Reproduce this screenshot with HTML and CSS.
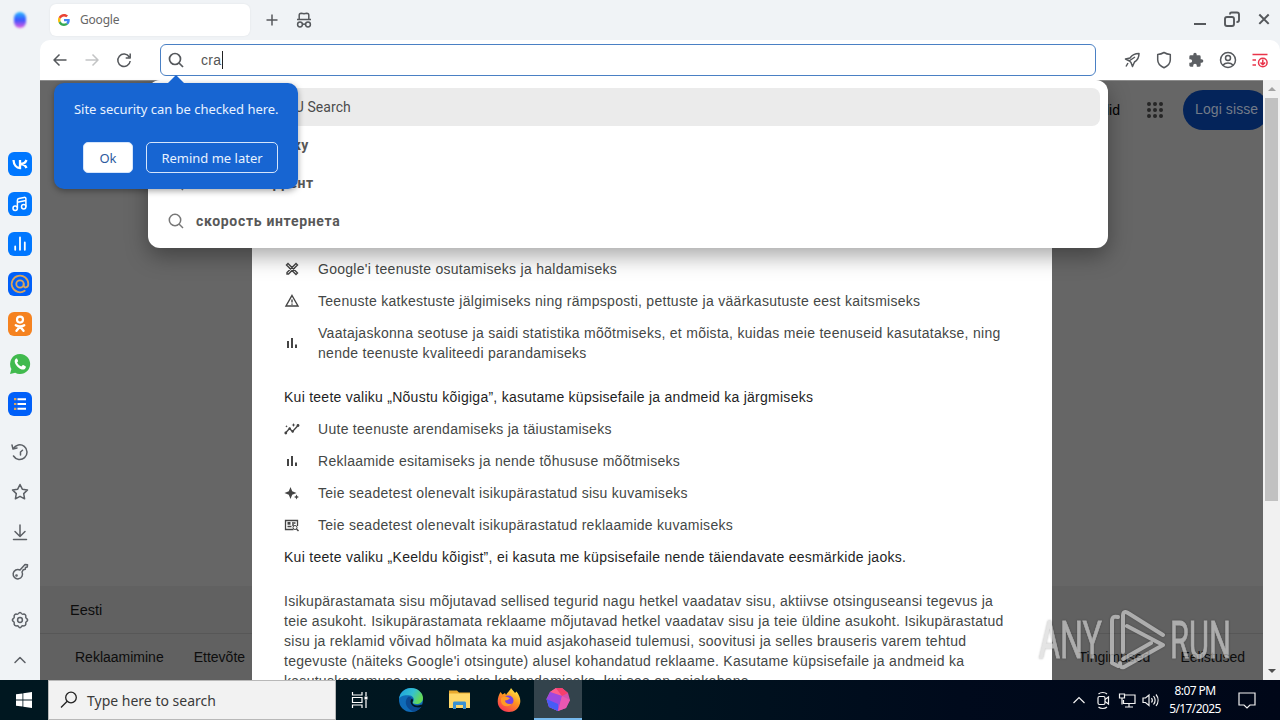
FILE: index.html
```html
<!DOCTYPE html>
<html lang="et">
	<head>
		<meta charset="utf-8">
		<meta name="viewport" content="width=device-width,initial-scale=1.0">
		<title>Google</title>
		<link rel="stylesheet" href="styles.css">
	</head>
	<body>
		<div class="browser">
			<aside class="sidebar">
				<div class="profile"></div>
				<nav class="apps">
					<svg viewBox="0 0 24 24"><rect width="24" height="24" rx="6" fill="#07f"/><path d="M5.500 8c.3 5 3 8 6.500 8V8M18.500 8c-1 2.500-3.500 4-6 4 2.500 0 5 1.500 6 4" fill="none" stroke="#fff" stroke-width="2.300"/></svg>
					<svg viewBox="0 0 24 24"><rect width="24" height="24" rx="6" fill="#07f"/><g fill="none" stroke="#fff" stroke-width="1.500"><circle cx="7.200" cy="16.300" r="2.200"/><circle cx="15.700" cy="14.800" r="2.200"/><path d="M9.400 16V8.200c0-1 .6-1.600 1.500-1.800l5.200-1c1-.2 1.800.4 1.800 1.400v8M9.400 10.200l8.500-1.600"/></g></svg>
					<svg viewBox="0 0 24 24"><rect width="24" height="24" rx="6" fill="#07f"/><path d="M7.200 14.500v3.300M12 5.500v12.300M16.800 10.500v7.300" stroke="#fff" stroke-width="1.800" stroke-linecap="round"/></svg>
					<svg viewBox="0 0 24 24"><rect width="24" height="24" rx="6" fill="#005ff9"/><g fill="none" stroke="#d9a45c" stroke-width="1.800" stroke-linecap="round"><circle cx="12" cy="12" r="3.700"/><path d="M15.700 12v1.200c0 3.400 4.600 3 4.600-1.200a8.300 8.300 0 1 0-3.600 6.800"/></g></svg>
					<svg viewBox="0 0 24 24"><rect width="24" height="24" rx="6" fill="#f58220"/><circle cx="12" cy="7.600" r="3" fill="none" stroke="#fff" stroke-width="2.200"/><path d="M7.800 13.200c2.700 1.700 5.700 1.700 8.400 0M12 14.500l-3.500 4.300M12 14.500l3.500 4.300" fill="none" stroke="#fff" stroke-width="2.400" stroke-linecap="round"/></svg>
					<svg viewBox="0 0 24 24"><path d="M12 2a10 10 0 0 0-8.600 15L2 22l5.200-1.300A10 10 0 1 0 12 2z" fill="#41ba4e"/><path d="M8 6.600c-2.700 2.200-.8 6.200 2 8.600 2.700 2.400 6.400 3.500 7.700.5.300-.8.200-1.200-.2-1.500l-2.200-1.100c-.4-.2-.8 0-1.100.4l-.8 1c-2-.7-3.500-2.200-4.300-4 1.300-1.200 1-1.600.6-2.500l-.5-1.200c-.3-.5-.8-.5-1.200-.2z" fill="#fff"/></svg>
					<svg viewBox="0 0 24 24"><rect width="24" height="24" rx="6" fill="#005ff9"/><path d="M9.500 7.200h8.500M9.500 12h8.500M9.500 16.800h8.500" stroke="#fff" stroke-width="1.900"/><path d="M6 7.200h2.400M6 12h2.400M6 16.800h2.400" stroke="#d9a45c" stroke-width="2.200"/></svg>
				</nav>
				<nav class="tools">
					<svg viewBox="0 0 20 20"><path d="M2 3l1 4 4-1M3.300 6.700A7.300 7.300 0 1 1 3.500 14M10.500 13v-3l2-1.800"/></svg>
					<svg viewBox="0 0 20 20"><path d="M10 2.500l2.300 4.700 5.200.7-3.800 3.700.9 5.200-4.600-2.500-4.600 2.500.9-5.200-3.800-3.700 5.200-.7z"/></svg>
					<svg viewBox="0 0 20 20"><path d="M10 3v11M5 9.500l5 5 5-5M3.500 17.500h13"/></svg>
					<svg viewBox="0 0 20 20"><path d="M10 8l5-5.500 2.500.2-.2 2.300-1.800.4-.2 1.800-2 .5-1.300 2.300a4.700 4.700 0 1 1-2-2z"/><circle cx="6.500" cy="13.500" r=".6"/></svg>
					<svg viewBox="0 0 20 20"><path d="M8.500 3.500c.8-1.500 2.200-1.500 3 0 .4.700 1 .9 1.700.7 1.700-.4 3 .9 2.600 2.600-.2.700.1 1.300.7 1.700 1.500.8 1.500 2.200 0 3-.6.400-.9 1-.7 1.700.4 1.700-.9 3-2.600 2.600-.7-.2-1.300.100-1.700.7-.8 1.500-2.200 1.500-3 0-.4-.6-1-.9-1.700-.7-1.700.4-3-.9-2.600-2.600.2-.7-.1-1.300-.7-1.700-1.500-.8-1.500-2.200 0-3 .6-.4.900-1 .7-1.700-.4-1.700.9-3 2.600-2.600.7.200 1.300 0 1.700-.7z"/><circle cx="10" cy="10" r="2.400"/></svg>
					<svg viewBox="0 0 20 20"><path d="M5 12.500l5-5 5 5"/></svg>
				</nav>
			</aside>

			<main class="window">
				<header class="tabstrip">
					<div class="tab">
						<svg class="favicon" viewBox="0 0 48 48"><path fill="#EA4335" d="M24 9.500c3.540 0 6.710 1.220 9.210 3.600l6.850-6.850C35.900 2.380 30.470 0 24 0 14.620 0 6.510 5.380 2.560 13.220l7.980 6.190C12.430 13.720 17.740 9.500 24 9.500z"/><path fill="#4285F4" d="M46.980 24.550c0-1.570-.15-3.090-.38-4.550H24v9.020h12.940c-.58 2.960-2.260 5.480-4.780 7.180l7.730 6c4.510-4.180 7.090-10.360 7.090-17.650z"/><path fill="#FBBC05" d="M10.530 28.590c-.48-1.450-.76-2.990-.76-4.590s.27-3.140.76-4.590l-7.980-6.190C.92 16.460 0 20.120 0 24s.92 7.540 2.560 10.780z"/><path fill="#34A853" d="M24 48c6.480 0 11.930-2.130 15.890-5.810l-7.730-6c-2.150 1.450-4.920 2.300-8.160 2.300-6.260 0-11.570-4.220-13.470-9.910l-7.980 6.190C6.510 42.620 14.620 48 24 48z"/></svg>
						<span>Google</span>
					</div>
					<svg class="line-icon" viewBox="0 0 20 20"><path d="M10 4.500v11M4.500 10h11"/></svg>
					<svg class="line-icon" viewBox="0 0 20 20"><path d="M3 9.500h14M5.200 9V5.200c0-1.200.7-2 2-2l2.800.5 2.800-.5c1.300 0 2 .8 2 2V9M8.500 14.500c1-.6 2-.6 3 0"/><circle cx="6" cy="14.500" r="2.400"/><circle cx="14" cy="14.500" r="2.400"/></svg>
					<div class="window-buttons">
						<svg class="line-icon" viewBox="0 0 20 20"><path d="M4 14h12" stroke-width="2"/></svg>
						<svg class="line-icon heavy" viewBox="0 0 20 20"><rect x="3" y="7" width="9" height="9" rx="2"/><path d="M8 4.500V4c0-1 .6-1.500 1.500-1.500H15c1.200 0 2 .8 2 2V10c0 1.200-.8 2-2 2h-.5"/></svg>
						<svg class="line-icon" viewBox="0 0 20 20"><path d="M5.300 4.500l9.400 9.400M14.700 4.500l-9.400 9.400" stroke-width="2"/></svg>
					</div>
				</header>

				<div class="toolbar">
					<div class="nav-buttons">
						<svg class="line-icon" viewBox="0 0 20 20"><path d="M16.500 10H4M9.500 4.500L4 10l5.500 5.500"/></svg>
						<svg class="line-icon disabled" viewBox="0 0 20 20"><path d="M3.500 10H16M10.500 4.500L16 10l-5.500 5.500"/></svg>
						<svg class="line-icon" viewBox="0 0 20 20"><path d="M15.300 7A6.200 6.200 0 1 0 16.200 11M16.200 3.500V8h-4.500"/></svg>
					</div>
					<div class="address">
						<svg class="line-icon lens" viewBox="0 0 20 20"><circle cx="9" cy="9" r="5.500"/><path d="M13 13l4 4"/></svg>
						<span class="query">cra</span>
					</div>
					<div class="extensions">
						<svg class="line-icon" viewBox="0 0 20 20"><path d="M17 3.500c-4 0-7 1.500-9 4.500L3.500 9l4 2L9 12.500l1.500 4 2-4.500C16 10 17 7 17 3.500zM7 11l6-4M6 13l-2 3.500"/></svg>
						<svg class="line-icon" viewBox="0 0 20 20"><path d="M10 2.500c2 1.300 4 1.900 6.300 2v5.200c0 3.700-2.500 6.300-6.300 8-3.800-1.700-6.300-4.300-6.300-8V4.500c2.300-.1 4.300-.7 6.300-2z"/></svg>
						<svg class="puzzle" viewBox="0 0 24 24"><path d="M20.500 11H19V7a2 2 0 0 0-2-2h-4V3.500a2.500 2.500 0 0 0-5 0V5H4a2 2 0 0 0-2 2v3.800h1.500a2.700 2.700 0 0 1 0 5.400H2V20c0 1.100.9 2 2 2h3.800v-1.500a2.700 2.700 0 0 1 5.400 0V22H17a2 2 0 0 0 2-2v-4h1.500a2.500 2.500 0 0 0 0-5z"/></svg>
						<svg class="line-icon" viewBox="0 0 20 20"><circle cx="10" cy="10" r="7.500"/><circle cx="10" cy="8" r="2.500"/><path d="M5 15c2.500-2.700 7.500-2.700 10 0"/></svg>
						<svg class="line-icon alert" viewBox="0 0 20 20"><path d="M2.500 4.500h15M2.500 10h3.500M2.500 15h3.500"/><circle cx="12.800" cy="12.500" r="4.300"/><path d="M12.800 9.500v5M10.500 12.500l2.300 2.300 2.300-2.300"/></svg>
					</div>
				</div>

				<div class="content">
					<div class="page">
						<div class="page-header">
							<span class="link-images">Pildid</span>
							<svg class="grid-icon" viewBox="0 0 18 18"><path d="M3 3h.01M9 3h.01M15 3h.01M3 9h.01M9 9h.01M15 9h.01M3 15h.01M9 15h.01M15 15h.01"/></svg>
							<span class="login">Logi sisse</span>
						</div>
						<footer class="page-footer">
							<div class="country">Eesti</div>
							<div class="footer-links">
								<span>Reklaamimine</span>
								<span>Ettevõte</span>
								<span class="terms">Tingimused</span>
								<span>Eelistused</span>
							</div>
						</footer>
					</div>
					<div class="scrollbar">
						<span class="arrow-up"></span>
						<div class="thumb"></div>
						<span class="arrow-down"></span>
					</div>

					<section class="consent">
						<ul>
							<li><svg viewBox="0 0 16 16"><path d="M4 2.500l9.500 9.500-1.500 1.500L2.500 4zM12 2.500L13.500 4 4.500 13H3v-1.500z" fill="none" stroke="#444" stroke-width="1.400"/></svg><p>Google'i teenuste osutamiseks ja haldamiseks</p></li>
							<li><svg viewBox="0 0 16 16"><path d="M8 2.500L14 13H2zM8 6.500v3M8 10.500v1.200" fill="none" stroke="#444" stroke-width="1.400"/></svg><p>Teenuste katkestuste jälgimiseks ning rämpsposti, pettuste ja väärkasutuste eest kaitsmiseks</p></li>
							<li><svg viewBox="0 0 16 16"><path d="M4 6v7M8 3v10M12 9.500V13" stroke="#444" stroke-width="2"/></svg><p>Vaatajaskonna seotuse ja saidi statistika mõõtmiseks, et mõista, kuidas meie teenuseid kasutatakse, ning<br>nende teenuste kvaliteedi parandamiseks</p></li>
						</ul>
						<p class="lead">Kui teete valiku „Nõustu kõigiga”, kasutame küpsisefaile ja andmeid ka järgmiseks</p>
						<ul>
							<li><svg viewBox="0 0 16 16"><path d="M1.500 12l4-4.500 3 3L14.500 4" fill="none" stroke="#444" stroke-width="1.300"/><g fill="#444"><circle cx="1.800" cy="12" r="1.400"/><circle cx="5.700" cy="7.500" r="1.200"/><circle cx="8.700" cy="10.500" r="1.200"/><circle cx="14" cy="4.500" r="1.400"/><path d="M9.500 2l.6 1.400 1.400.6-1.400.6-.6 1.400-.6-1.400L7.500 4l1.400-.6zM2.500 4l.4.900.9.400-.9.400-.4.900-.4-.9-.9-.4.900-.4z"/></g></svg><p>Uute teenuste arendamiseks ja täiustamiseks</p></li>
							<li><svg viewBox="0 0 16 16"><path d="M4 6v7M8 3v10M12 9.500V13" stroke="#444" stroke-width="2"/></svg><p>Reklaamide esitamiseks ja nende tõhususe mõõtmiseks</p></li>
							<li><svg viewBox="0 0 16 16"><path fill="#444" d="M6.500 2L8.200 6.300 12.500 8 8.200 9.700 6.500 14 4.800 9.700.5 8l4.300-1.700zM12.500 9.500l.8 1.700 1.700.8-1.700.8-.8 1.700-.8-1.700-1.700-.8 1.700-.8z"/></svg><p>Teie seadetest olenevalt isikupärastatud sisu kuvamiseks</p></li>
							<li><svg viewBox="0 0 16 16"><path d="M13.500 9V3.500h-12v9h8M3.500 9.500h4M8 6h3.500M8 8h2" fill="none" stroke="#444" stroke-width="1.300"/><path d="M3.500 5h3v2.700h-3z" fill="#444"/><circle cx="11" cy="10.500" r="2" fill="none" stroke="#444"/><path d="M12.500 12l2 2" stroke="#444" stroke-width="1.500"/></svg><p>Teie seadetest olenevalt isikupärastatud reklaamide kuvamiseks</p></li>
						</ul>
						<p class="lead-close">Kui teete valiku „Keeldu kõigist”, ei kasuta me küpsisefaile nende täiendavate eesmärkide jaoks.</p>
						<p class="details">Isikupärastamata sisu mõjutavad sellised tegurid nagu hetkel vaadatav sisu, aktiivse otsinguseansi tegevus ja<br>teie asukoht. Isikupärastamata reklaame mõjutavad hetkel vaadatav sisu ja teie üldine asukoht. Isikupärastatud<br>sisu ja reklamid võivad hõlmata ka muid asjakohaseid tulemusi, soovitusi ja selles brauseris varem tehtud<br>tegevuste (näiteks Google'i otsingute) alusel kohandatud reklaame. Kasutame küpsisefaile ja andmeid ka<br>kasutuskogemuse vanuse jaoks kohandamiseks, kui see on asjakohane.</p>
					</section>

					<div class="suggestions">
						<div class="suggestion active"><svg class="line-icon" viewBox="0 0 20 20"><circle cx="9" cy="9" r="5.700"/><path d="M13 13l4 4"/></svg><span>cra — Go.Mail.RU Search</span></div>
						<div class="suggestion"><svg class="line-icon" viewBox="0 0 20 20"><circle cx="9" cy="9" r="5.700"/><path d="M13 13l4 4"/></svg><b class="tight">скачать музыку</b></div>
						<div class="suggestion"><svg class="line-icon" viewBox="0 0 20 20"><circle cx="9" cy="9" r="5.700"/><path d="M13 13l4 4"/></svg><b class="medium">скачать торрент</b></div>
						<div class="suggestion"><svg class="line-icon" viewBox="0 0 20 20"><circle cx="9" cy="9" r="5.700"/><path d="M13 13l4 4"/></svg><b>скорость интернета</b></div>
					</div>

					<div class="hint">
						<p>Site security can be checked here.</p>
						<div class="hint-buttons">
							<button class="ok">Ok</button>
							<button class="later">Remind me later</button>
						</div>
					</div>
				</div>
			</main>
		</div>

		<footer class="taskbar">
			<div class="start"><svg viewBox="0 0 16 16"><path fill="#fff" d="M0 2.300l6.500-.9v6.200H0zM7.300 1.300L16 0v7.600H7.300zM0 8.400h6.500v6.200L0 13.700zM7.300 8.400H16V16l-8.700-1.300z"/></svg></div>
			<div class="search-box">
				<svg viewBox="0 0 18 18"><circle cx="11" cy="6.500" r="5.300"/><path d="M7.200 10.300L1 16.500"/></svg>
				<span>Type here to search</span>
			</div>
			<div class="task"><svg viewBox="0 0 18 18" fill="none" stroke="#fff" stroke-width="1.200"><path d="M1.500 1v3h9.500V1M1.500 17v-3h9.500v3M1.500 6.500h9.500v5H1.500zM15 1v4M15 9v8"/><path d="M13.500 5.500h3v3h-3z" fill="#fff" stroke="none"/></svg></div>
			<div class="task edge"><svg viewBox="0 0 24 24"><defs><linearGradient id="edgeTop" x1="0" y1="0" x2="1" y2=".4"><stop offset="0" stop-color="#199ee0"/><stop offset=".6" stop-color="#35c1d0"/><stop offset="1" stop-color="#64d957"/></linearGradient></defs><circle cx="12" cy="12" r="12" fill="#0f6bb8"/><path d="M0 11C1 4 6 0 12 0c7 0 12 5 12 10 0 4-3 6-6.500 6-3 0-4-1-3.500-2 2-2 .5-6-3-6.500C6 6.500 1 8 0 11z" fill="url(#edgeTop)"/><path d="M9 9c-5 5-1 13 6 14.500C19 23 22 20 22.500 18.500 17 21 11 18 11.500 13c0-1 .6-2 1.500-2.500C12 9 10.500 8.500 9 9z" fill="#0b4a92"/><path d="M13.500 14c-.6 3 4 4.500 9 2.500l2 1.500-2.500 1C16 21 11 17 11.500 13c.2-1.200.8-2 1.800-2.400.9 1.200.9 2.300.2 3.400z" fill="#001521"/></svg></div>
			<div class="task"><svg viewBox="0 0 24 24"><path d="M1 2.500h8l2 2h11V20H1z" fill="#e8a92e"/><path d="M1 5.500h21V20H1z" fill="#ffd869"/><path d="M5 21v-6c0-1 .6-1.600 1.500-1.600h10c1 0 1.500.6 1.500 1.600v6h-3v-4H8v4z" fill="#3b91d2"/></svg></div>
			<div class="task"><svg viewBox="0 0 24 24"><defs><linearGradient id="fox" x1=".8" y1="0" x2=".2" y2="1"><stop offset="0" stop-color="#fff04a"/><stop offset=".45" stop-color="#ff9520"/><stop offset="1" stop-color="#f72f58"/></linearGradient></defs><path d="M3.500 4l2 2.500L8 5l1 2c2-4 4-4 5-7 1 2 3 3 4 5l1.500-1.500c3 4 4.500 8 3.500 12-1.200 5-5.600 8.500-11 8.500C5.500 24 .7 19.500.7 13.500c0-4 1.300-7 2.800-9.500z" fill="url(#fox)"/><circle cx="11.500" cy="12.500" r="5" fill="#7542e5"/><path d="M4 10c3-2 7-1.500 9 .5-2 1-3 2-5 2 0 3 4 4.500 7 3-2 4-10 4-11-2z" fill="#ff9a26"/></svg></div>
			<div class="task current"><svg viewBox="0 0 24 24"><path d="M10 1h6l6 5 2 7-4 8-8 3-9-4-2.500-8L4 5z" fill="#d552ad"/><path d="M10 1l6 8-12-4z" fill="#ff5d8d"/><path d="M10 1h6l6 5-6 3z" fill="#f63f6d"/><path d="M4 5l12 4-4 15-9-4L.5 12z" fill="#9d48df"/><path d="M.5 12L12 17v7l-9-4z" fill="#465cf6"/><path d="M16 9l8 4-4 8-8 3z" fill="#e957b2"/></svg></div>
			<div class="tray">
				<svg viewBox="0 0 20 20"><path d="M4.500 13l5.500-5.500 5.500 5.500"/></svg>
				<svg viewBox="0 0 20 20"><rect x="5" y="6.500" width="7" height="8" rx="1.500"/><path d="M12 9.500L15.500 7v7L12 11.500M5.500 4c2-2 6.500-2 8.500 0M5.500 17c2 2 6.500 2 8.500 0"/></svg>
				<svg viewBox="0 0 20 20"><path d="M8 5h10v8.500H6.500V10M12 13.500V17M8 17h8M2.500 4h5v4h-5zM5 8v6.500"/></svg>
				<svg viewBox="0 0 20 20"><path d="M2 8v4.500h2.500L8 15.500V5L4.500 8zM10.500 8c1 1.400 1 3.200 0 4.500M12.500 6c2 2.600 2 6 0 8.500M15 4.500c2.700 3.300 2.700 8 0 11.500"/></svg>
				<div class="clock"><span>8:07 PM</span><span>5/17/2025</span></div>
				<svg class="notify" viewBox="0 0 20 20"><path d="M2 3h16v12h-5l-3 3-3-3H2z"/></svg>
			</div>
		</footer>

		<svg class="watermark" viewBox="0 0 196 64">
			<text x="2" y="50" textLength="63" lengthAdjust="spacingAndGlyphs">ANY</text>
			<g class="play"><path d="M81 9c-4-1-6 0-6 4v42l6 3"/><path d="M86 44V8c0-4 2-5 5-3l35 22M90 18l36 19-39 22c-3 1-4-1-4-4M86 51l28-16"/></g>
			<text x="133" y="50" textLength="61" lengthAdjust="spacingAndGlyphs">RUN</text>
		</svg>
	</body>
</html>
```
FILE: styles.css
```css
* {
	box-sizing: border-box;
}

body {
	margin: 0;
	width: 1280px;
	height: 720px;
	overflow: hidden;
	display: flex;
	flex-direction: column;
	position: relative;
	font-family: "Liberation Sans", Arial, sans-serif;
	font-size: 14px;
}

p, ul {
	margin: 0;
	padding: 0;
}

svg {
	display: block;
	flex: none;
}

.browser {
	height: 680px;
	display: flex;
	background: #f0f3f6;
}

/* Left sidebar */
.sidebar {
	width: 40px;
	display: flex;
	flex-direction: column;
	align-items: center;
}

.profile {
	width: 12px;
	height: 16px;
	margin-top: 12px;
	border-radius: 6px;
	background: linear-gradient(#28b8ff, #3a55ff 50%, #e55be0);
	filter: blur(1px);
}

.apps {
	display: flex;
	flex-direction: column;
	gap: 16px;
	margin-top: 124px;
}

.apps svg {
	width: 24px;
	height: 24px;
}

.tools {
	display: flex;
	flex-direction: column;
	gap: 20px;
	margin-top: 26px;
}

.tools svg {
	width: 20px;
	height: 20px;
	fill: none;
	stroke: #5c6066;
	stroke-width: 1.5;
	stroke-linejoin: round;
	stroke-linecap: round;
}

.tools svg:nth-child(5) {
	margin-top: 8px;
}

/* Tabs */
.window {
	width: 1240px;
}

.tabstrip {
	height: 40px;
	display: flex;
	align-items: center;
	padding: 0 6px 0 10px;
}

.tab {
	width: 200px;
	height: 32px;
	display: flex;
	align-items: center;
	gap: 10px;
	padding: 0 0 1px 8px;
	margin-right: 12px;
	border-radius: 6px;
	background: #fff;
	box-shadow: 0 0 2px rgba(0, 0, 0, 0.08);
	font-family: "Noto Sans", sans-serif;
	font-size: 12px;
	letter-spacing: -0.2px;
	color: #666;
}

.favicon {
	width: 12px;
	height: 12px;
}

.line-icon {
	width: 20px;
	height: 20px;
	fill: none;
	stroke: #55585c;
	stroke-width: 1.5;
	stroke-linejoin: round;
}

.heavy {
	stroke-width: 1.9;
}

.lens {
	stroke-width: 1.7;
}

.tabstrip > .line-icon {
	margin-right: 12px;
}

.window-buttons {
	display: flex;
	gap: 12px;
	margin-left: auto;
}

.toolbar {
	height: 40px;
	display: flex;
	align-items: center;
	padding: 0 10px;
	background: #fff;
	border-radius: 10px 10px 0 0;
}

.nav-buttons {
	width: 110px;
	display: flex;
	gap: 12px;
}

.disabled {
	opacity: 0.35;
}

.address {
	width: 936px;
	height: 32px;
	display: flex;
	align-items: center;
	padding-left: 5px;
	border: 1px solid #4a80c4;
	border-radius: 6px;
}

.query {
	margin-left: 15px;
	padding-right: 1px;
	border-right: 1px solid #222;
	line-height: 18px;
	font-size: 14px;
	letter-spacing: 0.3px;
	color: #555;
}

.extensions {
	display: flex;
	gap: 12px;
	margin-left: 26px;
}

.puzzle {
	width: 16px;
	height: 16px;
	margin: 2px;
	fill: #5c5f63;
}

.alert {
	stroke: #e9344a;
}

/* Page behind the consent dialog */
.content {
	height: 600px;
	display: flex;
	position: relative;
}

.page {
	width: 1223px;
	display: flex;
	flex-direction: column;
	justify-content: space-between;
	overflow: hidden;
	border-top: 1px solid #8c8c8c;
	background: #666;
}

.page-header {
	display: flex;
	align-items: center;
	justify-content: flex-end;
	padding-top: 9px;
	color: #000;
}

.grid-icon {
	width: 18px;
	height: 18px;
	margin: 0 19px 0 26px;
	stroke: #262626;
	stroke-width: 4;
	stroke-linecap: round;
}

.login {
	width: 86px;
	height: 40px;
	margin-right: -6px;
	padding-left: 12px;
	border-radius: 20px;
	line-height: 38px;
	background: #04245a;
	color: #737b88;
	letter-spacing: 0.1px;
}

.page-footer {
	height: 94px;
	background: #616161;
	color: #0d0d0d;
}

.country {
	height: 48px;
	padding-left: 30px;
	line-height: 48px;
	font-size: 14.5px;
	border-bottom: 1px solid #575757;
}

.footer-links {
	display: flex;
	gap: 30px;
	padding: 0 18px 0 35px;
	line-height: 47px;
}

.terms {
	margin-left: auto;
}

.scrollbar {
	width: 17px;
	display: flex;
	flex-direction: column;
	align-items: center;
	background: #f1f1f1;
}

.arrow-up, .arrow-down {
	border: 4px solid transparent;
	border-top-width: 0;
	border-bottom-color: #a3a3a3;
	margin: 7px 0;
}

.arrow-down {
	border-top: 4px solid #505050;
	border-bottom-width: 0;
	margin-top: auto;
}

.thumb {
	width: 13px;
	height: 403px;
	background: #c1c1c1;
}

.consent {
	position: absolute;
	left: 212px;
	top: 0;
	width: 800px;
	height: 600px;
	overflow: hidden;
	padding: 173px 32px 0;
	background: #fff;
	color: #444746;
	line-height: 20px;
	letter-spacing: 0.28px;
	white-space: nowrap;
}

.consent li {
	display: flex;
	align-items: center;
	gap: 18px;
	padding: 6px 0;
}

.consent li svg {
	width: 16px;
	height: 16px;
}

.lead, .lead-close {
	color: #1f1f1f;
}

.lead {
	margin: 18px 0 6px;
	letter-spacing: 0.26px;
}

.lead-close {
	margin: 6px 0 24px;
}

/* Address bar dropdown */
.suggestions {
	position: absolute;
	left: 108px;
	top: 0;
	width: 960px;
	padding: 8px;
	border-radius: 12px;
	background: #fff;
	box-shadow: 0 8px 22px rgba(0, 0, 0, 0.35);
	clip-path: inset(0 -50px -50px -50px);
}

.suggestion {
	height: 38px;
	display: flex;
	align-items: center;
	gap: 10px;
	padding-left: 10px;
	border-radius: 8px;
	font-family: Roboto, sans-serif;
	letter-spacing: 0.08px;
	color: #4c4c4c;
}

.suggestion b {
	letter-spacing: 0.68px;
	color: #585858;
}

.suggestion .tight {
	letter-spacing: 0.35px;
}

.suggestion .medium {
	letter-spacing: 0.55px;
}

.suggestion .line-icon {
	stroke: #777;
}

.active {
	background: #ebebeb;
}

/* Security hint bubble */
.hint {
	position: absolute;
	left: 14px;
	top: 3px;
	width: 244px;
	height: 106px;
	padding: 16px 20px;
	border-radius: 10px;
	background: #1765d2;
	box-shadow: 0 2px 6px rgba(0, 0, 0, 0.35);
	font-family: "Noto Sans", sans-serif;
	font-size: 13px;
	line-height: 20px;
	letter-spacing: -0.03px;
	color: #e8f2ff;
	white-space: nowrap;
}

.hint::before {
	content: "";
	position: absolute;
	left: 113px;
	top: -8px;
	border: 9px solid transparent;
	border-top-width: 0;
	border-bottom-color: #1765d2;
}

.hint-buttons {
	display: flex;
	justify-content: flex-end;
	gap: 13px;
	margin-top: 23px;
}

.hint button {
	height: 31px;
	padding: 0;
	border: 1px solid #d5e5fb;
	border-radius: 5px;
	font: inherit;
}

.ok {
	width: 50px;
	background: #fff;
	color: #2c5a9e;
}

.later {
	width: 132px;
	background: transparent;
	color: #e8f2ff;
}

/* Taskbar */
.taskbar {
	height: 40px;
	display: flex;
	background: linear-gradient(90deg, #001720, #001620 45%, #000a1c 75%, #000718);
}

.start {
	width: 48px;
	padding: 12px 16px;
}

.search-box {
	width: 288px;
	display: flex;
	align-items: center;
	gap: 9px;
	padding-left: 11px;
	border: 1px solid #b8b8b8;
	background: #f2f2f2;
	font-family: "Noto Sans", sans-serif;
	font-size: 14px;
	color: #3a3a3a;
}

.search-box svg {
	width: 18px;
	height: 18px;
	fill: none;
	stroke: #222;
	stroke-width: 1.3;
}

.task {
	width: 48px;
	display: flex;
	align-items: center;
	justify-content: center;
	margin-right: 1px;
}

.task svg {
	width: 24px;
	height: 24px;
}

.task:nth-child(3) svg {
	width: 18px;
	height: 18px;
}

.edge {
	margin-left: 2px;
}

.current {
	background: #33434c;
	border-bottom: 2px solid #76b9ed;
}

.tray {
	display: flex;
	align-items: center;
	gap: 4px;
	margin-left: auto;
	padding-right: 23px;
}

.tray svg {
	width: 20px;
	height: 20px;
	fill: none;
	stroke: #f2f2f2;
	stroke-width: 1.2;
}

.tray svg:nth-child(-n+4) {
	margin: 0 -2px 0 2px;
}

.clock {
	width: 62px;
	display: flex;
	flex-direction: column;
	align-items: center;
	font-family: "Noto Sans", sans-serif;
	font-size: 12px;
	line-height: 18px;
	letter-spacing: -0.6px;
	color: #fff;
	margin-left: 1px;
}

.tray .notify {
	margin-left: 7px;
}

.watermark {
	position: absolute;
	left: 1037px;
	top: 608px;
	width: 196px;
	height: 64px;
	opacity: 0.65;
	fill: #d6d6d6;
	font-family: Roboto, sans-serif;
	font-size: 51px;
	filter: drop-shadow(0 0 1px rgba(0, 0, 0, 0.4));
}

.watermark text {
	stroke: #d6d6d6;
	stroke-width: 0.8;
}

.play {
	fill: none;
	stroke: #d6d6d6;
	stroke-width: 4;
	stroke-linejoin: round;
	stroke-linecap: round;
}
```
